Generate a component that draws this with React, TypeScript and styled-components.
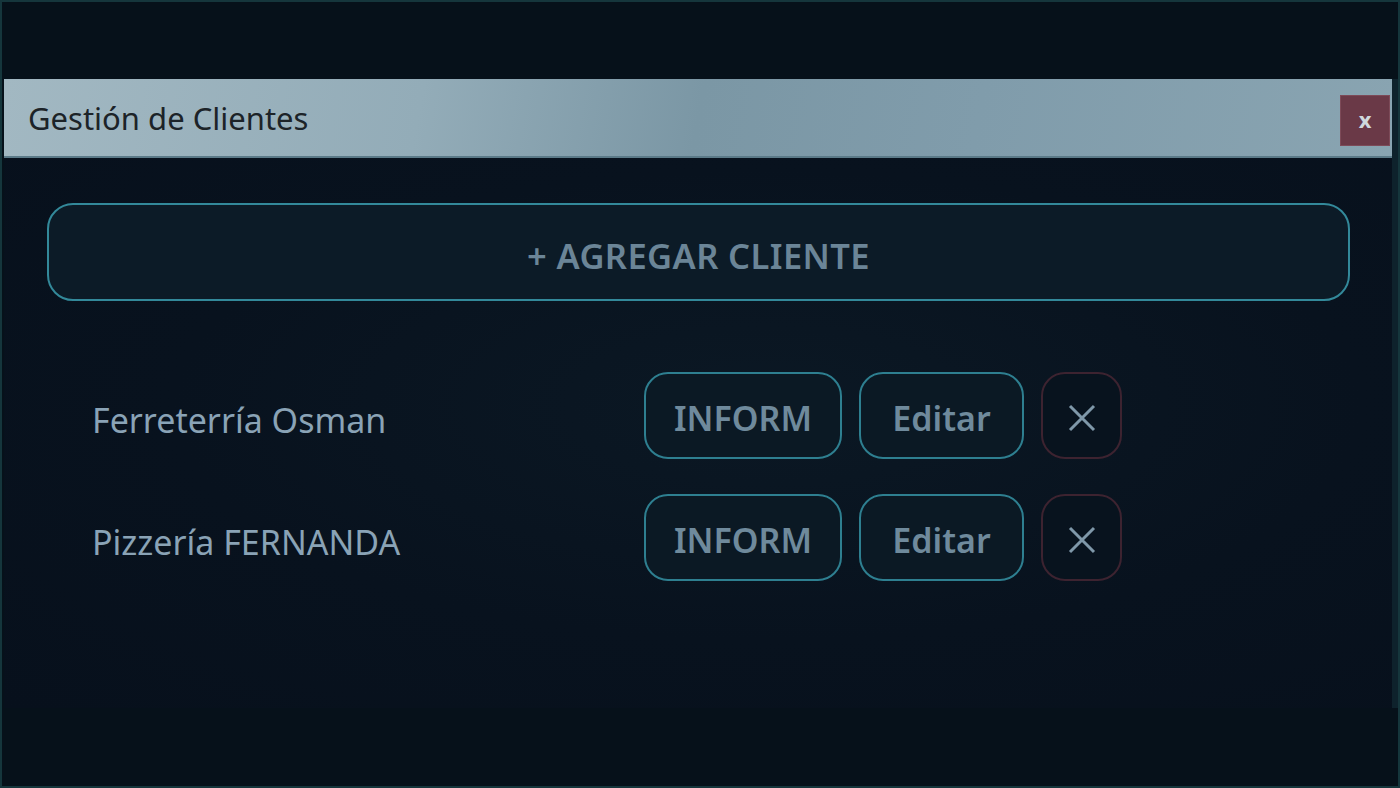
import styled, { createGlobalStyle } from 'styled-components';

const GlobalStyle = createGlobalStyle`
  * {
    box-sizing: border-box;
  }
  body {
    margin: 0;
    background-color: #06101a;
    font-family: 'Noto Sans', 'Open Sans', sans-serif;
  }
`;

const Page = styled.div`
  width: 100%;
  height: 100vh;
  padding: 77px 0 0 2px;
  border: 2px solid #15363c;
  background-color: #06111a;
  overflow: hidden;
`;

const Window = styled.section`
  width: 1394px;
  display: flex;
  flex-direction: column;
  border-right: 6px solid #0e222c;
`;

const TitleBar = styled.header`
  height: 79px;
  display: flex;
  align-items: center;
  justify-content: space-between;
  padding: 0 2px 0 24px;
  background: linear-gradient(100deg, #a2b8c2 0%, #93acb8 30%, #7b97a5 50%, #809cab 70%, #89a4b1 100%);
  border-bottom: 2px solid #5b7a88;
`;

const Title = styled.h1`
  margin: 0;
  font-size: 31px;
  font-weight: 400;
  color: #1c2328;
`;

const CloseButton = styled.button`
  width: 50px;
  height: 51px;
  margin-top: 6px;
  border: 1px solid #7d4a58;
  background-color: #6a3947;
  color: #cfd8dc;
  font-family: 'Noto Sans', sans-serif;
  font-size: 22px;
  font-weight: 700;
  line-height: 1;
  padding-bottom: 4px;
`;

const Body = styled.main`
  height: 550px;
  padding: 45px 42px 0 43px;
  background: radial-gradient(ellipse at 55% 45%, #0b1824 0%, #08121e 55%, #07101c 100%);
`;

const AddButton = styled.button`
  width: 100%;
  height: 98px;
  padding-top: 8px;
  border: 2px solid #33899a;
  border-radius: 26px;
  background-color: #0c1b27;
  color: #6b8597;
  font-family: 'Noto Sans', sans-serif;
  font-size: 34.5px;
  font-weight: 600;
  letter-spacing: 0.4px;
`;

const ClientList = styled.ul`
  list-style: none;
  margin: 71px 0 0;
  padding: 0 0 0 45px;
  display: flex;
  flex-direction: column;
  gap: 35px;
`;

const ClientRow = styled.li`
  display: grid;
  grid-template-columns: 552px auto;
  align-items: center;
  height: 87px;
`;

const ClientName = styled.span`
  padding-top: 8px;
  font-size: 34px;
  color: #8aa3b6;
`;

const Actions = styled.div`
  display: flex;
  gap: 17px;
`;

const ActionButton = styled.button<{ $width: number; $danger?: boolean }>`
  width: ${(p) => p.$width}px;
  height: 87px;
  padding-top: 5px;
  border: 2px solid ${(p) => (p.$danger ? '#3d2330' : '#2e7f90')};
  border-radius: 24px;
  background-color: ${(p) => (p.$danger ? '#08131e' : '#0b1924')};
  color: #6f8a9c;
  font-family: 'Noto Sans', sans-serif;
  font-size: 34px;
  font-weight: 600;
  display: flex;
  align-items: center;
  justify-content: center;
`;

const clients = [
  { id: 1, name: 'Ferreterría Osman' },
  { id: 2, name: 'Pizzería FERNANDA' },
];

const App = () => {
  return (
    <>
      <GlobalStyle />
      <Page>
        <Window>
          <TitleBar>
            <Title>Gestión de Clientes</Title>
            <CloseButton>x</CloseButton>
          </TitleBar>
          <Body>
            <AddButton>+ AGREGAR CLIENTE</AddButton>
            <ClientList>
              {clients.map((client) => (
                <ClientRow key={client.id}>
                  <ClientName>{client.name}</ClientName>
                  <Actions>
                    <ActionButton $width={198}>INFORM</ActionButton>
                    <ActionButton $width={165}>Editar</ActionButton>
                    <ActionButton $width={81} $danger>
                      <svg width="30" height="30" viewBox="0 0 30 30">
                        <path d="M3 3 L27 27 M27 3 L3 27" stroke="#7f98a9" strokeWidth="3" />
                      </svg>
                    </ActionButton>
                  </Actions>
                </ClientRow>
              ))}
            </ClientList>
          </Body>
        </Window>
      </Page>
    </>
  );
};

export default App;
